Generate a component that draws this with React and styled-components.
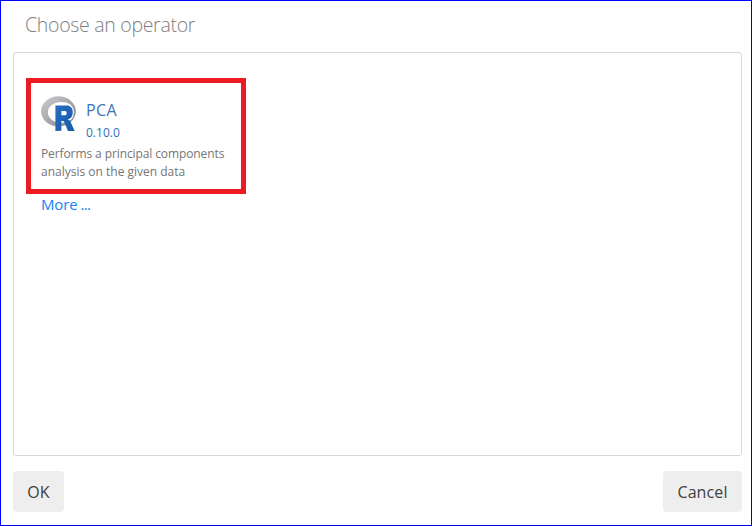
import React from "react";
import styled, { createGlobalStyle } from "styled-components";

const GlobalStyle = createGlobalStyle`
  * { box-sizing: border-box; }
  body { margin: 0; background: #fff; font-family: "Open Sans", "Noto Sans", sans-serif; }
`;

const Dialog = styled.main`
  display: flex;
  flex-direction: column;
  width: 752px;
  height: 526px;
  padding: 0 9px 12px 12px;
  border: 1px solid #0000ff;
  border-right-color: #0000d8;
  border-bottom-color: #0000d8;
  background: #fff;
`;

const Title = styled.h1`
  margin: 0;
  height: 51px;
  padding: 10px 0 0 12px;
  font-size: 19.5px;
  font-weight: 300;
  line-height: 27px;
  letter-spacing: -0.3px;
  color: #808080;
`;

const OperatorPanel = styled.section`
  height: 404px;
  padding: 25px 0 0 12px;
  border: 1px solid #d5d8dc;
  border-radius: 3px;
`;

const OperatorCard = styled.article`
  width: 220px;
  height: 116px;
  padding: 13px 10px 0;
  border: 5px solid #ed1c24;
`;

const CardHeader = styled.header`
  display: flex;
  gap: 10px;
  height: 47px;
`;

const Logo = styled.svg`
  display: block;
  width: 35px;
  height: 35px;
`;

const Name = styled.div`
  margin-top: 2px;
  font-size: 16px;
  line-height: 24px;
  letter-spacing: 0.4px;
  color: #3a75b8;
`;

const Version = styled.div`
  font-size: 12px;
  line-height: 22px;
  color: #2f6eb5;
`;

const Description = styled.p`
  margin: 2px 0 0;
  font-size: 12px;
  line-height: 18px;
  white-space: nowrap;
  color: #757575;
`;

const Line = styled.span`
  display: block;
  letter-spacing: ${(p) => p.$spacing};
`;

const MoreLink = styled.a`
  display: block;
  width: max-content;
  margin-left: 15px;
  font-size: 15px;
  line-height: 21px;
  letter-spacing: -0.15px;
  word-spacing: -0.8px;
  color: #1683f5;
`;

const Dots = styled.span`
  letter-spacing: -0.7px;
`;

const Actions = styled.footer`
  display: flex;
  justify-content: space-between;
  margin-top: 15px;
`;

const Button = styled.button`
  width: ${(p) => p.$width};
  height: 41px;
  padding: 1px 0 0;
  border: 0;
  border-radius: 4px;
  background: #eee;
  color: #404040;
  font: 400 16px "Open Sans", "Noto Sans", sans-serif;
  letter-spacing: ${(p) => p.$spacing};
`;

function RLogo() {
  return (
    <Logo viewBox="0 0 724 561" preserveAspectRatio="none" aria-label="R">
      <defs>
        <linearGradient id="ring" x1="0" y1="0" x2="1" y2="1">
          <stop offset="0" stopColor="#cbced0" />
          <stop offset="1" stopColor="#84838b" />
        </linearGradient>
        <linearGradient id="letter" x1="0" y1="0" x2="1" y2="1">
          <stop offset="0" stopColor="#276dc3" />
          <stop offset="1" stopColor="#165caa" />
        </linearGradient>
      </defs>
      <path
        fill="url(#ring)"
        fillRule="evenodd"
        d="M361.453,485.937C162.329,485.937,0.906,377.828,0.906,244.469C0.906,111.109,162.329,3,361.453,3C560.578,3,722,111.109,722,244.469C722,377.828,560.578,485.937,361.453,485.937ZM416.641,97.406C265.289,97.406,142.594,171.314,142.594,262.484C142.594,353.654,265.289,427.562,416.641,427.562C567.992,427.562,679.687,377.033,679.687,262.484C679.687,147.971,567.992,97.406,416.641,97.406Z"
      />
      <path
        fill="url(#letter)"
        fillRule="evenodd"
        d="M550,377C550,377,571.822,383.585,584.5,390C588.899,392.226,596.51,396.668,602,402.5C607.378,408.212,610,414,610,414L696,559L557,559.062L492,437C492,437,478.69,414.131,470.5,407.5C463.668,401.969,460.755,400,454,400C449.298,400,420.974,400,420.974,400L421,558.974L298,559.026L298,152.938L545,152.938C545,152.938,657.5,154.967,657.5,262C657.5,369.033,550,377,550,377ZM496.5,241.024L422.037,240.976L422,310.026L496.5,310.002C496.5,310.002,531,309.895,531,274.877C531,239.155,496.5,241.024,496.5,241.024Z"
      />
    </Logo>
  );
}

export default function App() {
  return (
    <>
      <GlobalStyle />
      <Dialog>
        <Title>Choose an operator</Title>
        <OperatorPanel>
          <OperatorCard>
            <CardHeader>
              <RLogo />
              <div>
                <Name>PCA</Name>
                <Version>0.10.0</Version>
              </div>
            </CardHeader>
            <Description>
              <Line $spacing="-0.1px">Performs a principal components</Line>
              <Line $spacing="0">analysis on the given data</Line>
            </Description>
          </OperatorCard>
          <MoreLink>More <Dots>...</Dots></MoreLink>
        </OperatorPanel>
        <Actions>
          <Button $width="51px" $spacing="0.1px">OK</Button>
          <Button $width="79px" $spacing="0.1px">Cancel</Button>
        </Actions>
      </Dialog>
    </>
  );
}
